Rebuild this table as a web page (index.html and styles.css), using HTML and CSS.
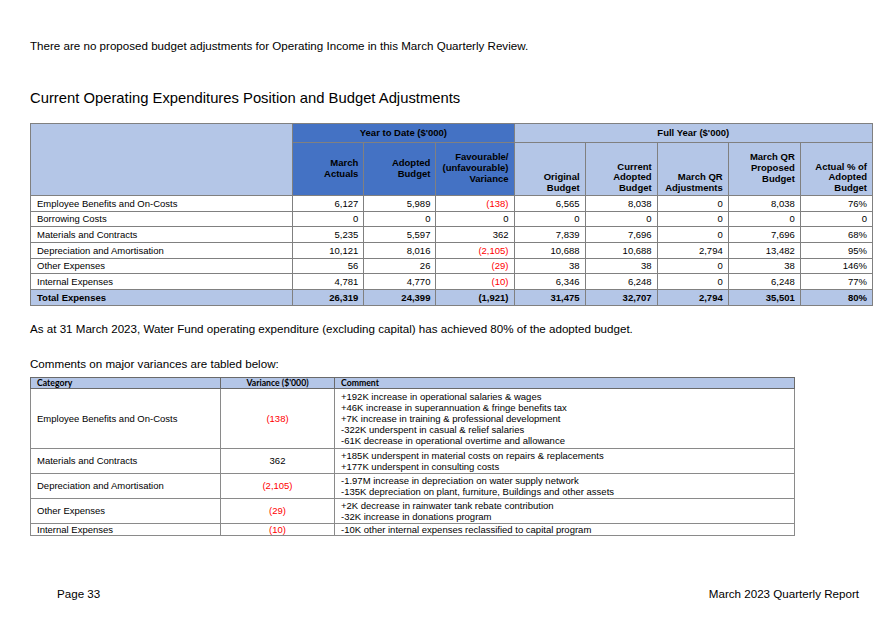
FILE: index.html
```html
<!DOCTYPE html>
<html>
<head>
<meta charset="utf-8">
<link rel="stylesheet" href="styles.css">
</head>
<body>
<div class="page">
  <p class="intro">There are no proposed budget adjustments for Operating Income in this March Quarterly Review.</p>
  <h2 class="heading">Current Operating Expenditures Position and Budget Adjustments</h2>
  <table class="exp">
    <colgroup>
      <col class="c-name"><col class="c-num"><col class="c-num2"><col class="c-var"><col class="c-num"><col class="c-num2"><col class="c-num"><col class="c-num2"><col class="c-num2">
    </colgroup>
    <thead>
      <tr class="h1">
        <th rowspan="2" class="lb"></th>
        <th colspan="3" class="db">Year to Date ($'000)</th>
        <th colspan="5" class="lb">Full Year ($'000)</th>
      </tr>
      <tr class="h2">
        <th class="db mid">March<br>Actuals</th>
        <th class="db mid">Adopted<br>Budget</th>
        <th class="db mid">Favourable/<br>(unfavourable)<br>Variance</th>
        <th class="lb">Original<br>Budget</th>
        <th class="lb">Current<br>Adopted<br>Budget</th>
        <th class="lb">March QR<br>Adjustments</th>
        <th class="lb mid">March QR<br>Proposed<br>Budget</th>
        <th class="lb">Actual % of<br>Adopted<br>Budget</th>
      </tr>
    </thead>
    <tbody>
      <tr><td>Employee Benefits and On-Costs</td><td>6,127</td><td>5,989</td><td class="neg">(138)</td><td>6,565</td><td>8,038</td><td>0</td><td>8,038</td><td>76%</td></tr>
      <tr><td>Borrowing Costs</td><td>0</td><td>0</td><td>0</td><td>0</td><td>0</td><td>0</td><td>0</td><td>0</td></tr>
      <tr><td>Materials and Contracts</td><td>5,235</td><td>5,597</td><td>362</td><td>7,839</td><td>7,696</td><td>0</td><td>7,696</td><td>68%</td></tr>
      <tr><td>Depreciation and Amortisation</td><td>10,121</td><td>8,016</td><td class="neg">(2,105)</td><td>10,688</td><td>10,688</td><td>2,794</td><td>13,482</td><td>95%</td></tr>
      <tr><td>Other Expenses</td><td>56</td><td>26</td><td class="neg">(29)</td><td>38</td><td>38</td><td>0</td><td>38</td><td>146%</td></tr>
      <tr><td>Internal Expenses</td><td>4,781</td><td>4,770</td><td class="neg">(10)</td><td>6,346</td><td>6,248</td><td>0</td><td>6,248</td><td>77%</td></tr>
      <tr class="total"><td>Total Expenses</td><td>26,319</td><td>24,399</td><td>(1,921)</td><td>31,475</td><td>32,707</td><td>2,794</td><td>35,501</td><td>80%</td></tr>
    </tbody>
  </table>
  <p class="note">As at 31 March 2023, Water Fund operating expenditure (excluding capital) has achieved 80% of the adopted budget.</p>
  <p class="note2">Comments on major variances are tabled below:</p>
  <table class="cmt">
    <colgroup><col class="k-cat"><col class="k-var"><col class="k-com"></colgroup>
    <thead>
      <tr><th class="t-cat">Category</th><th class="t-var">Variance ($'000)</th><th class="t-com">Comment</th></tr>
    </thead>
    <tbody>
      <tr class="r5"><td>Employee Benefits and On-Costs</td><td class="v neg">(138)</td><td class="com">+192K increase in operational salaries &amp; wages<br>+46K increase in superannuation &amp; fringe benefits tax<br>+7K increase in training &amp; professional development<br>-322K underspent in casual &amp; relief salaries<br>-61K decrease in operational overtime and allowance</td></tr>
      <tr class="r2"><td>Materials and Contracts</td><td class="v">362</td><td class="com">+185K underspent in material costs on repairs &amp; replacements<br>+177K underspent in consulting costs</td></tr>
      <tr class="r2"><td>Depreciation and Amortisation</td><td class="v neg">(2,105)</td><td class="com">-1.97M increase in depreciation on water supply network<br>-135K depreciation on plant, furniture, Buildings and other assets</td></tr>
      <tr class="r2"><td>Other Expenses</td><td class="v neg">(29)</td><td class="com">+2K decrease in rainwater tank rebate contribution<br>-32K increase in donations program</td></tr>
      <tr class="r1"><td>Internal Expenses</td><td class="v neg">(10)</td><td class="com">-10K other internal expenses reclassified to capital program</td></tr>
    </tbody>
  </table>
  <footer class="foot">
    <span>Page 33</span>
    <span>March 2023 Quarterly Report</span>
  </footer>
</div>
</body>
</html>
```

FILE: styles.css
```css
html, body {
  margin: 0;
  padding: 0;
  background: #ffffff;
}

.page {
  box-sizing: border-box;
  width: 888px;
  height: 628px;
  padding: 38px 0 0 30px;
  display: flex;
  flex-direction: column;
  align-items: flex-start;
  font-family: "Liberation Sans", Arial, sans-serif;
  color: #000000;
}

.intro {
  margin: 0;
  font-size: 11.6px;
  line-height: 16px;
}

.heading {
  margin: 35px 0 0 0;
  font-size: 14.8px;
  line-height: 18px;
  font-weight: normal;
}

/* expenditure table */
.exp {
  margin-top: 16px;
  border-collapse: collapse;
  table-layout: fixed;
  width: 843px;
  font-size: 9.5px;
}

.c-name { width: 262px; }
.c-num { width: 71px; }
.c-num2 { width: 72px; }
.c-var { width: 78px; }

.exp th,
.exp td {
  border: 1px solid #808080;
  padding: 0 5px 0 6px;
  overflow: hidden;
  white-space: nowrap;
}

.exp th {
  font-weight: bold;
  line-height: 10.8px;
  text-align: right;
  vertical-align: bottom;
  padding-bottom: 1px;
}

.exp .h1 th {
  height: 18px;
  text-align: center;
  vertical-align: middle;
  padding: 0;
}

.exp .h2 th {
  height: 51px;
}

.exp th.mid {
  vertical-align: middle;
}

.db {
  background: #4472c4;
  border-color: #3a3a3a;
}

.lb {
  background: #b4c6e7;
}

.exp td {
  height: 13.7px;
  line-height: 12px;
  text-align: right;
  vertical-align: bottom;
  padding-top: 0;
  padding-bottom: 1px;
}

.exp td:first-child {
  text-align: left;
}

.exp .total td {
  background: #b4c6e7;
  font-weight: bold;
}

.neg {
  color: #ff0000;
}

.note {
  margin: 15px 0 0 0;
  font-size: 11.6px;
  line-height: 16px;
}

.note2 {
  margin: 19px 0 0 0;
  font-size: 11.6px;
  line-height: 16px;
}

/* comment table */
.cmt {
  margin-top: 5px;
  border-collapse: collapse;
  table-layout: fixed;
  width: 764px;
  font-size: 9.5px;
  border: 1px solid #6a6a6a;
}

.k-cat { width: 190px; }
.k-var { width: 114px; }
.k-com { width: 460px; }

.cmt th {
  background: #b4c6e7;
  font-family: Lato, "Liberation Sans", sans-serif;
  font-weight: bold;
  font-size: 8.7px;
  line-height: 10px;
  height: 10px;
  padding: 0 6px;
  border: 1px solid #6a6a6a;
}

.t-cat, .t-com { text-align: left; }
.t-var { text-align: center; }

.cmt td {
  border: 1px solid #8a8a8a;
  padding: 0 6px;
  vertical-align: middle;
  line-height: 11px;
  white-space: nowrap;
}

.cmt td.v {
  text-align: center;
}

.cmt td.com {
  padding: 1px 6px 1px 6px;
}

.cmt .r5 td { height: 57px; }
.cmt .r2 td { height: 22px; }
.cmt .r1 td { height: 10px; padding-top: 0; padding-bottom: 0; }

.foot {
  margin-top: auto;
  align-self: stretch;
  display: flex;
  justify-content: space-between;
  padding: 0 29px 27px 27px;
  font-size: 11.6px;
  line-height: 15px;
}
```
